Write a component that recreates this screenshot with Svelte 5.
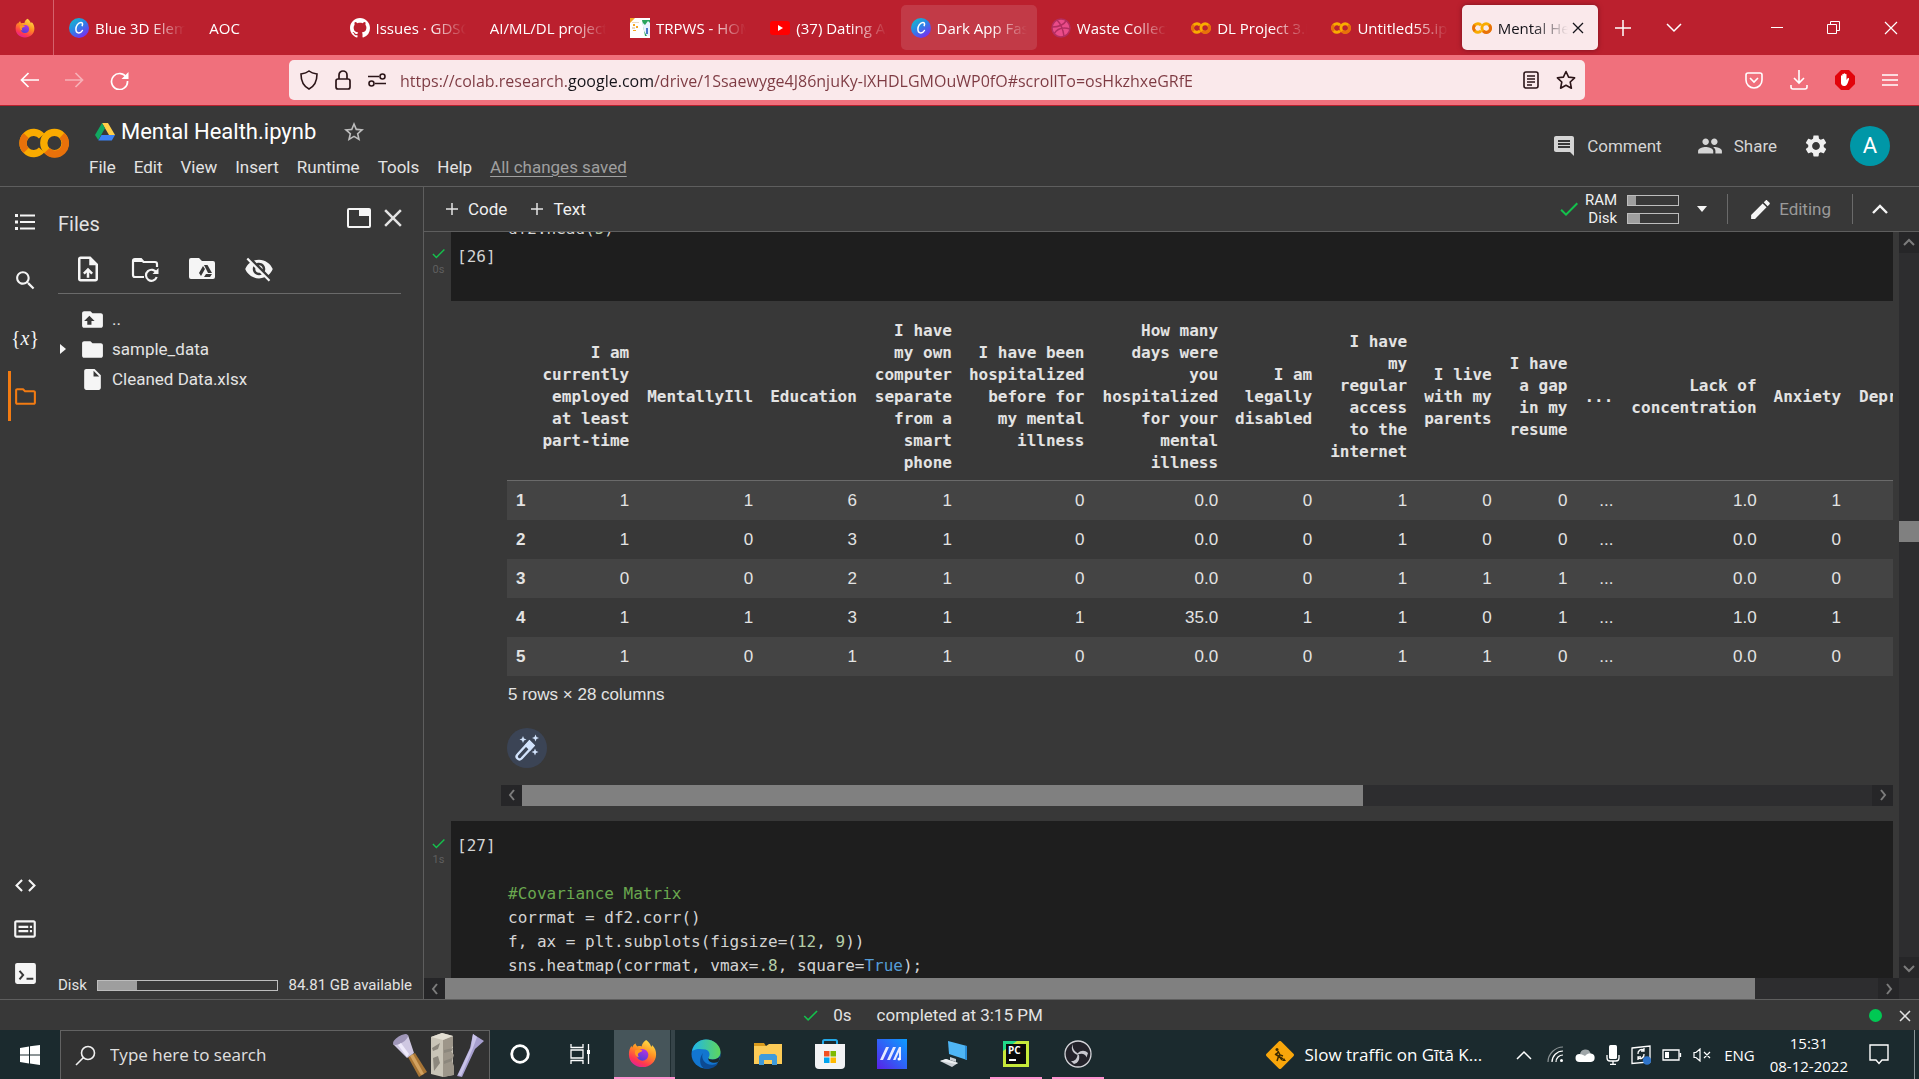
<script>
  const tabs = [
    { icon: 'canva', title: 'Blue 3D Element' },
    { icon: '', title: 'AOC' },
    { icon: 'github', title: 'Issues · GDSC-VIT' },
    { icon: '', title: 'AI/ML/DL projects' },
    { icon: 'sheet', title: 'TRPWS - HOME' },
    { icon: 'youtube', title: '(37) Dating App' },
    { icon: 'canva', title: 'Dark App Fashion', hover: true },
    { icon: 'dribbble', title: 'Waste Collection' },
    { icon: 'colab', title: 'DL Project 3.ip' },
    { icon: 'colab', title: 'Untitled55.ipynb' },
    { icon: 'colab', title: 'Mental Health', active: true }
  ];
  const menus = ['File', 'Edit', 'View', 'Insert', 'Runtime', 'Tools', 'Help'];
  const columns = [
    '',
    'I am\ncurrently\nemployed\nat least\npart-time',
    'MentallyIll',
    'Education',
    'I have\nmy own\ncomputer\nseparate\nfrom a\nsmart\nphone',
    'I have been\nhospitalized\nbefore for\nmy mental\nillness',
    'How many\ndays were\nyou\nhospitalized\nfor your\nmental\nillness',
    'I am\nlegally\ndisabled',
    'I have\nmy\nregular\naccess\nto the\ninternet',
    'I live\nwith my\nparents',
    'I have\na gap\nin my\nresume',
    '...',
    'Lack of\nconcentration',
    'Anxiety',
    'Depression'
  ];
  const rows = [
    ['1', '1', '1', '6', '1', '0', '0.0', '0', '1', '0', '0', '...', '1.0', '1', ''],
    ['2', '1', '0', '3', '1', '0', '0.0', '0', '1', '0', '0', '...', '0.0', '0', ''],
    ['3', '0', '0', '2', '1', '0', '0.0', '0', '1', '1', '1', '...', '0.0', '0', ''],
    ['4', '1', '1', '3', '1', '1', '35.0', '1', '1', '0', '1', '...', '1.0', '1', ''],
    ['5', '1', '0', '1', '1', '0', '0.0', '0', '1', '1', '0', '...', '0.0', '0', '']
  ];
  // Each line is a list of [token class, text] pairs.
  const headCode = [[['', 'df2.head('], ['num', '5'], ['', ')']]];
  const corrCode = [
    [['com', '#Covariance Matrix']],
    [['', 'corrmat = df2.corr()']],
    [['', 'f, ax = plt.subplots(figsize=('], ['num', '12'], ['', ', '], ['num', '9'], ['', '))']],
    [['', 'sns.heatmap(corrmat, vmax='], ['num', '.8'], ['', ', square='], ['kw', 'True'], ['', ');']]
  ];
  const P = {
    search: 'M15.5 14h-.79l-.28-.27C15.41 12.59 16 11.11 16 9.5 16 5.91 13.09 3 9.5 3S3 5.91 3 9.5 5.91 16 9.5 16c1.61 0 3.09-.59 4.23-1.57l.27.28v.79l5 4.99L20.49 19l-4.99-5zm-6 0C7.01 14 5 11.99 5 9.5S7.01 5 9.5 5 14 7.01 14 9.5 11.99 14 9.5 14z',
    folderLine: 'M9.17 6l2 2H20v10H4V6h5.17M10 4H4c-1.1 0-1.99.9-1.99 2L2 18c0 1.1.9 2 2 2h16c1.1 0 2-.9 2-2V8c0-1.1-.9-2-2-2h-8l-2-2z',
    folder: 'M10 4H4c-1.1 0-1.99.9-1.99 2L2 18c0 1.1.9 2 2 2h16c1.1 0 2-.9 2-2V8c0-1.1-.9-2-2-2h-8l-2-2z',
    file: 'M6 2c-1.1 0-1.99.9-1.99 2L4 20c0 1.1.89 2 1.99 2H18c1.1 0 2-.9 2-2V8l-6-6H6zm7 7V3.5L18.5 9H13z',
    gear: 'M19.14 12.94c.04-.3.06-.61.06-.94 0-.32-.02-.64-.07-.94l2.03-1.58c.18-.14.23-.41.12-.61l-1.92-3.32c-.12-.22-.37-.29-.59-.22l-2.39.96c-.5-.38-1.03-.7-1.62-.94l-.36-2.54c-.04-.24-.24-.41-.48-.41h-3.84c-.24 0-.43.17-.47.41l-.36 2.54c-.59.24-1.13.57-1.62.94l-2.39-.96c-.22-.08-.47 0-.59.22L2.74 8.87c-.12.21-.08.47.12.61l2.03 1.58c-.05.3-.09.63-.09.94s.02.64.07.94l-2.03 1.58c-.18.14-.23.41-.12.61l1.92 3.32c.12.22.37.29.59.22l2.39-.96c.5.38 1.03.7 1.62.94l.36 2.54c.05.24.24.41.48.41h3.84c.24 0 .44-.17.47-.41l.36-2.54c.59-.24 1.13-.56 1.62-.94l2.39.96c.22.08.47 0 .59-.22l1.92-3.32c.12-.22.07-.47-.12-.61l-2.01-1.58zM12 15.6c-1.98 0-3.6-1.62-3.6-3.6s1.62-3.6 3.6-3.6 3.6 1.62 3.6 3.6-1.62 3.6-3.6 3.6z',
    comment: 'M21.99 4c0-1.1-.89-2-1.99-2H4c-1.1 0-2 .9-2 2v12c0 1.1.9 2 2 2h14l4 4-.01-18zM18 14H6v-2h12v2zm0-3H6V9h12v2zm0-3H6V6h12v2z',
    people: 'M16 11c1.66 0 2.99-1.34 2.99-3S17.66 5 16 5c-1.66 0-3 1.34-3 3s1.34 3 3 3zm-8 0c1.66 0 2.99-1.34 2.99-3S9.66 5 8 5C6.34 5 5 6.34 5 8s1.34 3 3 3zm0 2c-2.33 0-7 1.17-7 3.5V19h14v-2.5c0-2.33-4.67-3.5-7-3.5zm8 0c-.29 0-.62.02-.97.05 1.16.84 1.97 1.97 1.97 3.45V19h6v-2.5c0-2.33-4.67-3.5-7-3.5z',
    pencil: 'M3 17.25V21h3.75L17.81 9.94l-3.75-3.75L3 17.25zM20.71 7.04c.39-.39.39-1.02 0-1.41l-2.34-2.34c-.39-.39-1.02-.39-1.41 0l-1.83 1.83 3.75 3.75 1.83-1.83z',
    hidden: 'M12 7c2.76 0 5 2.24 5 5 0 .65-.13 1.26-.36 1.83l2.92 2.92c1.51-1.26 2.7-2.89 3.43-4.75-1.73-4.39-6-7.5-11-7.5-1.4 0-2.74.25-3.98.7l2.16 2.16C10.74 7.13 11.35 7 12 7zM2 4.27l2.28 2.28.46.46C3.08 8.3 1.78 10.02 1 12c1.73 4.39 6 7.5 11 7.5 1.55 0 3.03-.3 4.38-.84l.42.42L19.73 22 21 20.73 3.27 3 2 4.27zM7.53 9.8l1.55 1.55c-.05.21-.08.43-.08.65 0 1.66 1.34 3 3 3 .22 0 .44-.03.65-.08l1.55 1.55c-.67.33-1.41.53-2.2.53-2.76 0-5-2.24-5-5 0-.79.2-1.53.53-2.2zm4.31-.78l3.15 3.15.02-.16c0-1.66-1.34-3-3-3l-.17.01z',
    star: 'M22 9.24l-7.19-.62L12 2 9.19 8.63 2 9.24l5.46 4.73L5.82 21 12 17.27 18.18 21l-1.63-7.03L22 9.24zM12 15.4l-3.76 2.27 1-4.28-3.32-2.88 4.38-.38L12 6.1l1.71 4.04 4.38.38-3.32 2.88 1 4.28L12 15.4z',
    check: 'M9 16.17L4.83 12l-1.42 1.41L9 19 21 7l-1.41-1.41z',
    close: 'M19 6.41L17.59 5 12 10.59 6.41 5 5 6.41 10.59 12 5 17.59 6.41 19 12 13.41 17.59 19 19 17.59 13.41 12z',
    code: 'M9.4 16.6L4.8 12l4.6-4.6L8 6l-6 6 6 6 1.4-1.4zm5.2 0l4.6-4.6-4.6-4.6L16 6l6 6-6 6-1.4-1.4z',
    list: 'M2 4h3v3H2zM7 4.500h15v2H7zM2 10.500h3v3H2zM7 11h15v2H7zM2 17h3v3H2zM7 17.500h15v2H7z',
    upload: 'M14 2H6c-1.100 0-2 .9-2 2v16c0 1.100.9 2 2 2h12c1.100 0 2-.9 2-2V8l-6-6zm4 18H6V4h7v5h5v11zM8 15l1.400 1.400L11 14.800V19h2v-4.200l1.600 1.600L16 15l-4-4z',
    up: 'M10 4H4c-1.100 0-2 .9-2 2v12c0 1.100.9 2 2 2h16c1.100 0 2-.9 2-2V8c0-1.100-.9-2-2-2h-8l-2-2zM9 8.500l5 5h-3V17H7v-3.500H4z',
    kbd: 'M20 4H4c-1.100 0-2 .9-2 2v12c0 1.100.9 2 2 2h16c1.100 0 2-.9 2-2V6c0-1.100-.9-2-2-2zm0 14H4V6h16v12zM6 9h9v2H6zM16.500 9h2v2h-2zM6 13h9v2H6zM16.500 13h2v2h-2z',
    term: 'M4 2h16a2 2 0 0 1 2 2v16a2 2 0 0 1-2 2H4a2 2 0 0 1-2-2V4c0-1.100.9-2 2-2zm1.500 8L8.500 13.500 5.500 17 7 18.200l4-4.700-4-4.700zM13 16v2h6.500v-2z'
  };
</script>

{#snippet mi(path, size = 24)}
  <svg width={size} height={size} viewBox="0 0 24 24" fill="currentColor" aria-hidden="true"><path d={path} fill-rule="evenodd" /></svg>
{/snippet}

{#snippet colab(w)}
  <svg width={w} height={w} viewBox="0 0 24 24" fill="none" stroke-width="3.500" aria-hidden="true">
    <path d="M10.900 8.700a5.100 5.100 0 1 0 0 6.600" stroke="#f9ab00" />
    <path d="M3.400 8.400a5.100 5.100 0 0 0 0 7.200" stroke="#e8710a" />
    <circle cx="17" cy="12" r="5.100" stroke="#f9ab00" />
    <path d="M20.600 8.400a5.100 5.100 0 1 1-7.200 7.200" stroke="#e8710a" />
  </svg>
{/snippet}

{#snippet firefox(size)}
  <svg width={size} height={size} viewBox="0 0 32 32" aria-hidden="true">
    <defs>
      <linearGradient id="fx" x1="0.800" y1="0" x2="0.300" y2="1"><stop offset="0" stop-color="#ffe74a" /><stop offset="0.450" stop-color="#ff9022" /><stop offset="0.800" stop-color="#ff3750" /><stop offset="1" stop-color="#e1219a" /></linearGradient>
      <linearGradient id="fp" x1="0.700" y1="0" x2="0.300" y2="1"><stop offset="0" stop-color="#b833e1" /><stop offset="1" stop-color="#4b3fd6" /></linearGradient>
    </defs>
    <path fill="url(#fx)" d="M20 1c3 2 5 5 5.500 7.500.8-.3 1-1 1-2C30 9.500 31 13.500 31 17c0 8-6.500 14-15 14S1 25 1 17c0-4 1-7 3-9.500 0 1 .3 1.500.7 2C5.500 7 7 5.500 8.500 5c0 1.500.8 2.500 2 3.200 1.500-.5 3-.5 4.500 0C15.500 5 17.500 2.500 20 1z" />
    <circle cx="16" cy="17.500" r="6.500" fill="url(#fp)" />
    <path fill="#ff9a1f" d="M8 12.500c3-1.500 5.500-1 8 .2-1 1.800-3 1.800-4.500 3-1 1-.8 3 .8 4.300-3.500 0-5.500-3.500-4.300-7.500z" />
  </svg>
{/snippet}

{#snippet favicon(kind)}
  {#if kind === 'canva'}
    <svg width="20" height="20" viewBox="0 0 20 20" aria-hidden="true">
      <defs><linearGradient id="cv" x1="0" y1="0" x2="0.700" y2="1"><stop offset="0" stop-color="#12c3c4" /><stop offset="0.500" stop-color="#2a86e6" /><stop offset="1" stop-color="#7a2df0" /></linearGradient></defs>
      <circle cx="10" cy="10" r="10" fill="url(#cv)" />
      <path d="M13.200 7.600c.8-1.800.2-3.200-1.400-3.200-2.600 0-4.900 3.600-4.900 6.700 0 2.300 1.100 3.900 2.900 3.900 1.600 0 2.900-1.200 3.600-2.500" fill="none" stroke="#fff" stroke-width="1.500" stroke-linecap="round" />
    </svg>
  {:else if kind === 'github'}
    <svg width="20" height="20" viewBox="0 0 16 16" fill="#fff" aria-hidden="true"><path d="M8 0C3.580 0 0 3.580 0 8c0 3.540 2.290 6.530 5.470 7.590.4.070.55-.17.55-.38 0-.19-.01-.82-.01-1.490-2.010.37-2.530-.49-2.690-.94-.09-.23-.48-.94-.82-1.130-.28-.15-.68-.52-.01-.53.63-.01 1.080.58 1.230.82.72 1.210 1.870.87 2.330.66.070-.52.28-.87.51-1.070-1.780-.2-3.640-.89-3.640-3.950 0-.87.31-1.590.82-2.150-.08-.2-.36-1.020.080-2.120 0 0 .67-.21 2.200.82.64-.18 1.320-.27 2-.27s1.360.09 2 .27c1.530-1.040 2.200-.82 2.200-.82.44 1.100.16 1.920.080 2.120.51.56.82 1.270.82 2.150 0 3.070-1.870 3.750-3.650 3.950.29.25.54.73.54 1.480 0 1.070-.01 1.930-.01 2.200 0 .21.15.46.55.38A8.010 8.010 0 0 0 16 8c0-4.420-3.580-8-8-8z" /></svg>
  {:else if kind === 'sheet'}
    <svg width="20" height="20" viewBox="0 0 20 20" aria-hidden="true"><path fill="#fff" d="M0 0h20v20H0z" /><path fill="#28a35c" d="M12 2h8v16h-5z" /><path fill="#f5a623" d="M0 0h5L0 5zM3 6h2v2H3zM6 8h2v2H6zM3 12h3v1H3z" /><path fill="#e8d8c4" d="M2 4h7v1H2zM2 9h3v2H2z" /><path fill="#e9f1ff" d="M12 4l3 3 3-4 2 2v13h-3l-3-5z" /><path fill="#4b79c9" d="M16 10h2v6h-2z" /></svg>
  {:else if kind === 'youtube'}
    <svg width="20" height="20" viewBox="0 0 20 20" aria-hidden="true"><rect y="3" width="20" height="14" rx="3" fill="#f00" /><path fill="#fff" d="M8 7l5 3-5 3z" /></svg>
  {:else if kind === 'dribbble'}
    <svg width="20" height="20" viewBox="0 0 20 20" fill="none" stroke="#b32d60" stroke-width="1.500" aria-hidden="true"><circle cx="10" cy="10" r="9" fill="#ea4c89" /><path d="M6 2c4 4 6 9 7 16M1 9c6 0 11-1 14-6M3 16c3-5 9-7 16-5" /></svg>
  {:else if kind === 'colab'}
    {@render colab(20)}
  {/if}
{/snippet}

{#snippet chev(d, size = 12)}
  <svg width={size} height={size} viewBox="0 0 12 12" fill="none" stroke="currentColor" stroke-width="2" aria-hidden="true"><path {d} /></svg>
{/snippet}

{#snippet codeLines(lines)}
  <div class="code">
    {#each lines as line}
      <div class="line">{#each line as [kind, text]}<span class={kind}>{text}</span>{/each}</div>
    {/each}
  </div>
{/snippet}

<div class="screen">
  <header class="tabbar">
    <button class="pinned" aria-label="Firefox">{@render firefox(20)}</button>
    <nav class="tabs" aria-label="Tabs">
      {#each tabs as t}
        <div class="tab" class:hover={t.hover} class:active={t.active}>
          <button class="tabmain">
            {#if t.icon}{@render favicon(t.icon)}{/if}
            <span class="tabtitle">{t.title}</span>
          </button>
          {#if t.active}
            <button class="tabclose" aria-label="Close tab"><svg width="12" height="12" viewBox="0 0 12 12" stroke="currentColor" stroke-width="1.300"><path d="M1 1l10 10M11 1L1 11" /></svg></button>
          {/if}
        </div>
      {/each}
    </nav>
    <button class="newtab" aria-label="New tab"><svg width="16" height="16" viewBox="0 0 16 16" stroke="#fff" stroke-width="1.500"><path d="M8 0v16M0 8h16" /></svg></button>
    <button class="listtabs" aria-label="List all tabs"><svg width="16" height="10" viewBox="0 0 16 10" fill="none" stroke="#fff" stroke-width="1.500"><path d="M1 1l7 7 7-7" /></svg></button>
    <div class="winbtns">
      <button aria-label="Minimise"><svg width="12" height="12" viewBox="0 0 12 12" stroke="#fff"><path d="M0 5.500h12" /></svg></button>
      <button aria-label="Restore"><svg width="13" height="13" viewBox="0 0 13 13" fill="none" stroke="#fff"><path d="M.5 3.500h9v9h-9zM3.500 3.500v-3h9v9h-3" /></svg></button>
      <button aria-label="Close"><svg width="14" height="14" viewBox="0 0 14 14" stroke="#fff" stroke-width="1.200"><path d="M1 1l12 12M13 1L1 13" /></svg></button>
    </div>
  </header>

  <div class="navbar">
    <div class="navbtns">
      <button aria-label="Back"><svg width="19" height="16" viewBox="0 0 19 16" fill="none" stroke="#fff" stroke-width="1.700"><path d="M19 8H1.500M8.500 1l-7 7 7 7" /></svg></button>
      <button class="dim" aria-label="Forward"><svg width="19" height="16" viewBox="0 0 19 16" fill="none" stroke="#fff" stroke-width="1.700"><path d="M0 8h17.500M10.500 1l7 7-7 7" /></svg></button>
      <button aria-label="Reload"><svg width="19" height="19" viewBox="0 0 19 19" fill="none" stroke="#fff" stroke-width="1.700"><path d="M16.700 7A8 8 0 1 0 17.500 10" /><path fill="#fff" stroke="none" d="M18.500 1v7h-7z" /></svg></button>
    </div>
    <div class="urlbar">
      <svg width="18" height="20" viewBox="0 0 18 20" fill="none" stroke="#2b1518" stroke-width="1.600" aria-hidden="true"><path d="M9 1c2.500 2 5 2.500 8 3 0 7-2 12-8 15C3 16 1 11 1 4c3-.5 5.500-1 8-3z" /></svg>
      <svg width="16" height="20" viewBox="0 0 16 20" fill="none" stroke="#2b1518" stroke-width="1.700" aria-hidden="true"><rect x="1" y="9" width="14" height="10" rx="2" /><path d="M4 9V5a4 4 0 0 1 8 0v4" /></svg>
      <svg width="18" height="14" viewBox="0 0 18 14" fill="none" stroke="#2b1518" stroke-width="1.600" aria-hidden="true"><path d="M0 3.500h11M7 10.500h11" /><circle cx="14.500" cy="3.500" r="2.500" /><circle cx="3.500" cy="10.500" r="2.500" /></svg>
      <input class="url" type="text" aria-label="Address" value="https://colab.research.google.com/drive/1Ssaewyge4J86njuKy-lXHDLGMOuWP0fO#scrollTo=osHkzhxeGRfE" />
      <button aria-label="Reader view"><svg width="16" height="18" viewBox="0 0 16 18" fill="none" stroke="#2b1518" stroke-width="1.600"><rect x="1" y="1" width="14" height="16" rx="2" /><path d="M4 5h8M4 8h8M4 11h8M4 14h5" stroke-width="1.300" /></svg></button>
      <button aria-label="Bookmark"><svg width="20" height="20" viewBox="0 0 20 20" fill="none" stroke="#2b1518" stroke-width="1.600" stroke-linejoin="round"><path d="M10 1.500l2.600 5.600 6 .7-4.400 4.200 1.200 6.200-5.400-3-5.400 3 1.200-6.200L1.400 7.800l6-.7z" /></svg></button>
    </div>
    <div class="exts">
      <button aria-label="Pocket"><svg width="18" height="17" viewBox="0 0 18 17" fill="none" stroke="#fff" stroke-width="1.600"><path d="M3 1h12a2 2 0 0 1 2 2v5c0 4.500-3.500 8-8 8s-8-3.500-8-8V3a2 2 0 0 1 2-2zM5 6l4 4 4-4" /></svg></button>
      <button aria-label="Downloads"><svg width="18" height="20" viewBox="0 0 18 20" fill="none" stroke="#fff" stroke-width="1.600"><path d="M9 0v13M4 8l5 5 5-5M1 15v2a2 2 0 0 0 2 2h12a2 2 0 0 0 2-2v-2" /></svg></button>
      <button aria-label="Ad blocker"><svg width="20" height="20" viewBox="0 0 20 20"><path fill="#e2040b" d="M6 0h8l6 6v8l-6 6H6l-6-6V6z" /><path fill="#fff" d="M6 9V6c0-1 1.300-1 1.300 0V4.500c0-1 1.400-1 1.400 0V4c0-1 1.400-1 1.400 0v.5c0-1 1.400-1 1.400 0V10l1-1.500c.6-.9 1.900-.4 1.500.7-.8 2.500-1.800 6.800-4.200 6.800H9c-2 0-3-1.500-3-3z" /></svg></button>
      <button aria-label="Menu"><svg width="16" height="14" viewBox="0 0 16 14" stroke="#fff" stroke-width="1.500"><path d="M0 2h16M0 7h16M0 12h16" /></svg></button>
    </div>
  </div>

  <div class="head">
    <a class="logo" href="#home" aria-label="Colab home">{@render colab(50)}</a>
    <div class="headmain">
      <div class="titlerow">
        <svg width="20" height="18" viewBox="0 0 20 18" aria-hidden="true"><path fill="#ffcf48" d="M7 0h6l7 12h-6z" /><path fill="#11a861" d="M7 0l3 5.200L3.300 17 0 12z" /><path fill="#3b82f6" d="M6.500 12H20l-3.200 5.500H3.300z" /></svg>
        <h1>Mental Health.ipynb</h1>
        <button class="star" aria-label="Star">{@render mi(P.star, 24)}</button>
      </div>
      <nav class="menus" aria-label="Notebook menu">
        {#each menus as m}<button>{m}</button>{/each}
        <a href="#history">All changes saved</a>
      </nav>
    </div>
    <div class="headright">
      <button class="hbtn">{@render mi(P.comment, 24)}Comment</button>
      <button class="hbtn">{@render mi(P.people, 26)}Share</button>
      <button class="gear" aria-label="Settings">{@render mi(P.gear, 26)}</button>
      <button class="avatar" aria-label="Account">A</button>
    </div>
  </div>

  <div class="body">
    <aside class="side">
      <nav class="rail" aria-label="Side panel">
        <button aria-label="Table of contents">{@render mi(P.list, 24)}</button>
        <button aria-label="Find">{@render mi(P.search, 25)}</button>
        <button class="vars" aria-label="Variables">&#123;<i>x</i>&#125;</button>
        <button class="on" aria-label="Files">{@render mi(P.folderLine, 25)}</button>
        <span class="grow"></span>
        <button class="low" aria-label="Snippets">{@render mi(P.code, 25)}</button>
        <button class="low" aria-label="Command palette">{@render mi(P.kbd, 26)}</button>
        <button class="low" aria-label="Terminal">{@render mi(P.term, 25)}</button>
      </nav>
      <section class="files">
        <div class="fhead">
          <h2>Files</h2>
          <button aria-label="Open in new tab"><svg width="24" height="20" viewBox="0 0 24 20"><rect x="1" y="1" width="22" height="18" rx="1" fill="none" stroke="#f5f5f5" stroke-width="2" /><path fill="#f5f5f5" d="M12 1h11v7H12z" /></svg></button>
          <button aria-label="Close panel">{@render mi(P.close, 30)}</button>
        </div>
        <div class="ftools">
          <button aria-label="Upload">{@render mi(P.upload, 30)}</button>
          <button aria-label="Refresh"><svg width="30" height="30" viewBox="0 0 30 30" fill="none" stroke="#f5f5f5" stroke-width="2.200"><path d="M14 23H5a2 2 0 0 1-2-2V7a2 2 0 0 1 2-2h6l2.500 3H25a2 2 0 0 1 2 2v3" /><path d="M3 5h8l2 3H3z" fill="#f5f5f5" stroke="none" /><path d="M26.500 19a5.500 5.500 0 1 0 .2 4" /><path d="M28.500 14v6h-6z" fill="#f5f5f5" stroke="none" /></svg></button>
          <button aria-label="Mount Drive"><svg width="30" height="30" viewBox="0 0 30 30"><path fill="#f5f5f5" d="M4 4h8l3 3h11a2 2 0 0 1 2 2v14a2 2 0 0 1-2 2H4a2 2 0 0 1-2-2V6a2 2 0 0 1 2-2z" /><path d="M17 11h3.500l4.500 8h-4zM16 12l2 3-4 7-2-3zM19 20h6l-2 3h-6z" fill="#383838" /></svg></button>
          <button aria-label="Show hidden files">{@render mi(P.hidden, 30)}</button>
        </div>
        <ul class="tree">
          <li><span class="tw"></span><button>{@render mi(P.up, 25)}<span>..</span></button></li>
          <li><span class="tw"><svg width="6" height="10" viewBox="0 0 6 10" fill="#f5f5f5" aria-hidden="true"><path d="M0 0l6 5-6 5z" /></svg></span><button>{@render mi(P.folder, 25)}<span>sample_data</span></button></li>
          <li><span class="tw"></span><button>{@render mi(P.file, 25)}<span>Cleaned Data.xlsx</span></button></li>
        </ul>
        <span class="grow"></span>
        <div class="disk"><span>Disk</span><div class="bar"><i></i></div><span>84.81 GB available</span></div>
      </section>
    </aside>

    <main class="main">
      <div class="nbbar">
        <button class="add"><svg width="12" height="12" viewBox="0 0 12 12" stroke="#e3e3e3" stroke-width="1.500"><path d="M6 0v12M0 6h12" /></svg>Code</button>
        <button class="add"><svg width="12" height="12" viewBox="0 0 12 12" stroke="#e3e3e3" stroke-width="1.500"><path d="M6 0v12M0 6h12" /></svg>Text</button>
        <span class="grow"></span>
        <div class="res">
          <span class="green">{@render mi(P.check, 24)}</span>
          <div class="labels"><span>RAM</span><span>Disk</span></div>
          <div class="meters"><div class="bar"><i class="ram"></i></div><div class="bar"><i class="dsk"></i></div></div>
          <button class="caret" aria-label="Resource options"><svg width="10" height="6" viewBox="0 0 10 6" fill="#f5f5f5"><path d="M0 0h10L5 6z" /></svg></button>
        </div>
        <button class="editing">{@render mi(P.pencil, 25)}Editing</button>
        <button class="fold" aria-label="Collapse header"><svg width="16" height="10" viewBox="0 0 16 10" fill="none" stroke="#f5f5f5" stroke-width="2.400"><path d="M1 9l7-7 7 7" /></svg></button>
      </div>

      <div class="nbwrap">
        <div class="nb">
          <section class="cell first">
            <div class="gutter"><span class="green">{@render mi(P.check, 17)}</span><small>0s</small></div>
            <div class="editor"><span class="prompt">[26]</span>{@render codeLines(headCode)}</div>
          </section>

          <section class="out">
            <div class="tablewrap">
              <table>
                <thead><tr>{#each columns as c}<th scope="col">{c}</th>{/each}</tr></thead>
                <tbody>
                  {#each rows as r}
                    <tr>{#each r as v, i}{#if i === 0}<th scope="row">{v}</th>{:else}<td>{v}</td>{/if}{/each}</tr>
                  {/each}
                </tbody>
              </table>
            </div>
            <p>5 rows × 28 columns</p>
            <button class="magic" aria-label="Convert to interactive table"><svg width="30" height="30" viewBox="0 0 30 30"><path d="M17.500 8.500l4 4L9.500 25.500a2.500 2.500 0 0 1-4-4z" fill="none" stroke="#d2e3fc" stroke-width="2.400" /><path d="M17.500 8.500l4 4-3.500 4-4-4z" fill="#d2e3fc" stroke="#d2e3fc" stroke-width="2" /><path fill="#d2e3fc" d="M11 3l1 2.500 2.500 1-2.500 1-1 2.500-1-2.500-2.500-1 2.500-1zM23.500 1.500l1 2.500 2.500 1-2.500 1-1 2.500-1-2.500-2.500-1 2.500-1zM23 15.500l1 2.500 2.500 1-2.500 1-1 2.500-1-2.500-2.500-1 2.500-1z" /></svg></button>
            <div class="hbar inner">
              <button aria-label="Scroll left">{@render chev('M8 1L4 6l4 5')}</button><i></i><span></span><button aria-label="Scroll right">{@render chev('M4 1l4 5-4 5')}</button>
            </div>
          </section>

          <section class="cell">
            <div class="gutter"><span class="green">{@render mi(P.check, 17)}</span><small>1s</small></div>
            <div class="editor"><span class="prompt">[27]</span>{@render codeLines(corrCode)}</div>
          </section>
        </div>
        <div class="vbar">
          <button aria-label="Scroll up">{@render chev('M1 8l5-5 5 5')}</button><span class="above"></span><i></i><span class="below"></span><button aria-label="Scroll down">{@render chev('M1 4l5 5 5-5')}</button>
        </div>
      </div>
      <div class="hbar outer">
        <button aria-label="Scroll left">{@render chev('M8 1L4 6l4 5')}</button><i></i><span></span><button aria-label="Scroll right">{@render chev('M4 1l4 5-4 5')}</button>
        <div class="corner"></div>
      </div>
    </main>
  </div>

  <footer class="status">
    <span class="green">{@render mi(P.check, 19)}</span><span class="sec">0s</span><span>completed at 3:15 PM</span>
    <div class="stright"><span class="dot"></span><button aria-label="Dismiss"><svg width="12" height="12" viewBox="0 0 12 12" stroke="#e3e3e3" stroke-width="1.500"><path d="M1 1l10 10M11 1L1 11" /></svg></button></div>
  </footer>

  <div class="taskbar">
    <button class="start" aria-label="Start"><svg width="20" height="20" viewBox="0 0 20 20" fill="#fff"><path d="M0 3l9-1.500v8H0zM10 1.300L20 0v9.500H10zM0 10.500h9v8L0 17zM10 10.500h10V20l-10-1.400z" /></svg></button>
    <label class="search">
      <svg width="21" height="21" viewBox="0 0 21 21" fill="none" stroke="#f0f0f0" stroke-width="1.600" aria-hidden="true"><circle cx="13" cy="8" r="6.500" /><path d="M8.500 12.500L1 20" /></svg>
      <input type="search" placeholder="Type here to search" aria-label="Search" />
      <svg class="art" width="92" height="46" viewBox="0 0 92 46" aria-hidden="true">
        <path fill="#a87535" d="M15 25l7-4 12 19-8 5z" /><path fill="#d3a260" d="M17 24l3-2 11 20-3 1z" /><path fill="#cfc8e2" d="M0 12L15 3l6 18-7 5z" /><ellipse cx="7.500" cy="7.500" rx="8.500" ry="3.500" transform="rotate(-32 7.500 7.500)" fill="#9f96b8" /><path fill="#eeeafa" d="M5 13l3-2 8 11-2 3z" />
        <path fill="#c9c4b7" d="M38 5l11-4 11 3v39l-10 2-12-3z" /><path fill="#9d968a" d="M50 8l10-4v10l-3 4 4 5-2 6 2 5v9l-11 2z" /><path fill="#e3dfd3" d="M38 5l11-4 11 3-10 4z" /><path fill="#8c877d" d="M39 16l8-5-2 6-5 2zM40 26l5-2 2 7-6 8zM51 18l9-2-1 3-8 2zM51 29l8-3v3l-8 3z" />
        <path fill="#a79fcf" d="M80 2l11 7-9 8-13 28-5-1 13-28z" /><path fill="#c9c3e8" d="M80 2l4 3-4 11-12 28-3-1 13-28z" />
      </svg>
    </label>
    <button class="app cortana" aria-label="Cortana"><svg width="20" height="20" viewBox="0 0 20 20"><circle cx="10" cy="10" r="8.300" fill="none" stroke="#fff" stroke-width="2.800" /></svg></button>
    <button class="app" aria-label="Task view"><svg width="20" height="20" viewBox="0 0 20 20" fill="none" stroke="#fff" stroke-width="1.300"><path d="M1 0v3.500h12V0M1 6h12v8H1zM1 20v-3.500h12V20M18.500 0v20" /><path d="M17 6h3v4h-3z" fill="#fff" stroke="none" /></svg></button>
    <button class="app current" aria-label="Firefox">{@render firefox(29)}</button>
    <button class="app" aria-label="Edge"><svg width="30" height="30" viewBox="0 0 30 30"><defs><linearGradient id="eg"><stop stop-color="#1fb5ea" /><stop offset="1" stop-color="#5fd65b" /></linearGradient></defs><circle cx="15" cy="15" r="14.500" fill="#1276d0" /><path fill="url(#eg)" d="M1 12C3 4 9 .5 15 .5c8 0 14.500 6 14.500 12.500 0 5-4 7.500-8 7.500-3 0-4.500-1-4-2 2-3 1-7-3-8-5-1-10-1-13.500 1.500z" /><path fill="#0c4a92" d="M12 14c-3 6 3 13 11 11.500 2-.4 3.500-1.300 4-1-2 3-6.500 5.500-11 5.500-7 0-9-10-4-16z" /><path fill="#1b2a2e" d="M17.500 18.500c-.5 1 1 2 4 2 3.500 0 6-1.500 7.500-3.500-.2 3-1 5-2 6-4 2-11 0-9.500-4.500z" /></svg></button>
    <button class="app" aria-label="File Explorer"><svg width="28" height="24" viewBox="0 0 28 24"><path fill="#d99a1c" d="M0 1h10l2 3H0z" /><path fill="#fccb57" d="M0 4h12l3-2h13v20H0z" /><path fill="#3f9bdc" d="M5 14l2-2h14l2 2v9h-5v-5h-8v5H5z" /></svg></button>
    <button class="app" aria-label="Store"><svg width="30" height="30" viewBox="0 0 30 30"><path fill="none" stroke="#23a8e8" stroke-width="2" d="M8 6V2.500C8 1.500 8.500 1 9.500 1h11c1 0 1.500.5 1.500 1.500V6" /><path fill="#f2f3f5" d="M0 5h30v21a4 4 0 0 1-4 4H4a4 4 0 0 1-4-4z" /><path fill="#f25022" d="M9 12h5.500v5.500H9z" /><path fill="#7fba00" d="M15.500 12H21v5.500h-5.500z" /><path fill="#00a4ef" d="M9 18.500h5.500V24H9z" /><path fill="#ffb900" d="M15.500 18.500H21V24h-5.500z" /></svg></button>
    <button class="app" aria-label="MyASUS"><svg width="30" height="30" viewBox="0 0 30 30"><defs><linearGradient id="ms" x1="0" y1="1" x2="1" y2="0"><stop stop-color="#5a20e8" /><stop offset="0.500" stop-color="#2f62f6" /><stop offset="1" stop-color="#0b9dff" /></linearGradient></defs><path fill="url(#ms)" d="M0 0h30v30H0z" /><path fill="#e6e9ff" d="M3 21L9 8h3L6 21zM10 21l6-13h3l-6 13zM16 21l6-13h2v13h-2v-8l-3.500 8z" /><circle cx="22" cy="20" r="1.500" fill="#fff" /></svg></button>
    <button class="app" aria-label="PC"><svg width="28" height="26" viewBox="0 0 28 26"><path fill="#4fb6f5" d="M8 0l19 5v14L9 13z" /><path fill="#2a8dd8" d="M25 5l2 0v14l-2-1z" /><path fill="#c9ced3" d="M10 16l6 2v3l-6-2zM0 20l6-2 12 4-6 4z" /><path fill="#eceff1" d="M0 20l6-2 12 4-2 1z" /></svg></button>
    <button class="app open" aria-label="PyCharm"><svg width="26" height="26" viewBox="0 0 26 26"><path fill="#c7e93a" d="M0 0h26v26H0z" /><path fill="#21d789" d="M0 0h14L0 10z" /><path fill="#0a0a0a" d="M3 3h20v20H3z" /><text x="5" y="13" font-size="10" font-weight="700" font-family="Open Sans, sans-serif" fill="#fff">PC</text><path fill="#fff" d="M6 18h7v2H6z" /></svg></button>
    <button class="app open" aria-label="OBS"><svg width="28" height="28" viewBox="0 0 28 28" fill="none"><circle cx="14" cy="14" r="13" fill="#23222a" stroke="#d5d5da" stroke-width="1.300" /><g fill="#c8c8cf"><path d="M9 4c-1 4 1 7 5 9.500 0 1 0 1-.5 1.500C8 13 6.500 8 9 4z" /><path d="M24 13c-3-3-7-3-10 0-.5.700-.5 1 0 1.500 4-1.500 7.500-.5 8.500 3z" /><path d="M10 24c4-1 6-4 5-9-.5-.5-1-.5-1.500 0-.5 4-3 6.500-6.500 6z" /></g></svg></button>
    <span class="grow"></span>
    <button class="news"><svg width="28" height="28" viewBox="0 0 28 28" aria-hidden="true"><path fill="#f9a60b" d="M12.500.8a2 2 0 0 1 3 0l11.700 11.700a2 2 0 0 1 0 3L15.500 27.200a2 2 0 0 1-3 0L.8 15.500a2 2 0 0 1 0-3z" /><g stroke="#3d2b00" stroke-width="1.500" fill="none"><path d="M12 10l2 4 3 1M12 11l-2 3M13 14l-2 6M13 15l3 4M9 13l8 5" /></g><circle cx="11" cy="8.500" r="1.500" fill="#3d2b00" /><path fill="#3d2b00" d="M16 20l2-3 2 3z" /></svg>Slow traffic on Gītā K...</button>
    <div class="tray">
      <button class="more" aria-label="Show hidden icons"><svg width="16" height="10" viewBox="0 0 16 10" fill="none" stroke="#fff" stroke-width="1.500"><path d="M1 9l7-7 7 7" /></svg></button>
      <svg width="17" height="17" viewBox="0 0 17 17" fill="none" stroke="#fff" stroke-width="1.200" aria-hidden="true"><path d="M1 16C1 8 8 1 16 1" opacity="0.500" /><path d="M5 16C5 10 10 5 16 5M9 16c0-4 3-7 7-7" /><circle cx="14.500" cy="14.500" r="1.500" fill="#fff" stroke="none" /></svg>
      <svg width="20" height="14" viewBox="0 0 20 14" aria-hidden="true"><path fill="#9fa6a9" d="M5 6a5.500 5.500 0 0 1 10.500-1L10 10z" /><path fill="#fff" d="M4.500 14a4 4 0 0 1 0-8C7 6 8 7 10 8c2-2 4-3 6-2.500A4.300 4.300 0 0 1 16 14z" /></svg>
      <svg width="14" height="20" viewBox="0 0 14 20" aria-hidden="true"><rect x="3" width="8" height="14" rx="1.500" fill="#fff" /><path d="M1 10v3a3 3 0 0 0 3 3h6a3 3 0 0 0 3-3v-3M7 16v3M4 19.300h6" fill="none" stroke="#fff" stroke-width="1.300" /></svg>
      <svg width="20" height="20" viewBox="0 0 20 20" fill="none" stroke="#fff" stroke-width="1.300" aria-hidden="true"><path d="M1 3l18-2v16L1 18.500z" /><path d="M13 5a4 4 0 0 0-6 4M7 13a4 4 0 0 0 6-4M13 3v3h-3M7 15v-3h3" /><circle cx="16" cy="15.500" r="4.200" fill="#2f74c9" stroke="none" /></svg>
      <svg width="20" height="12" viewBox="0 0 20 12" fill="none" stroke="#fff" stroke-width="1.300" aria-hidden="true"><path d="M1 1h16v10H1zM18.500 4v4" /><path fill="#fff" stroke="none" d="M3 3h4v6H3z" /></svg>
      <svg width="20" height="14" viewBox="0 0 20 14" fill="none" stroke="#fff" stroke-width="1.200" aria-hidden="true"><path d="M1 4.500h2l4-3.500v12L3 9.500H1zM11 4l6 6M17 4l-6 6" /></svg>
      <button class="lang">ENG</button>
    </div>
    <button class="clock"><span>15:31</span><span>08-12-2022</span></button>
    <button class="notif" aria-label="Notifications"><svg width="20" height="21" viewBox="0 0 20 21" fill="none" stroke="#fff" stroke-width="1.400"><path d="M1 1h18v15h-6l-3 3.500L7 16H1z" /></svg></button>
  </div>
</div>

<style>
  :global(body) { margin: 0; background: #383838; overflow: hidden; }
  * { box-sizing: border-box; }
  button { background: none; border: 0; padding: 0; margin: 0; font: inherit; color: inherit; display: flex; align-items: center; justify-content: center; white-space: nowrap; }
  svg { display: block; flex: none; }
  h1, h2, p, ul { margin: 0; padding: 0; font-weight: 400; }
  .grow { flex: 1; }
  .green { color: #14c14c; display: flex; }
  .screen { height: 100vh; display: flex; flex-direction: column; background: #383838; color: #e3e3e3; font: 17px/24px Roboto, sans-serif; overflow: hidden; }

  .tabbar { flex: none; height: 55px; background: #bb202e; display: flex; align-items: stretch; font: 15px/20px "Open Sans", sans-serif; color: #fff; }
  .pinned { width: 54px; border-right: 1px solid #d4626c; padding-right: 4px; }
  .tabs { flex: 0 1 1543px; min-width: 0; margin-left: 3px; display: flex; padding: 5px 0; }
  .tab { flex: 1 1 0; min-width: 0; display: flex; align-items: center; margin: 0 2px; padding: 0 10px; border-radius: 5px; }
  .tabmain { flex: 1; min-width: 0; gap: 6px; justify-content: flex-start; }
  .tabtitle { flex: 1; min-width: 0; overflow: hidden; text-align: left; mask-image: linear-gradient(to left, transparent, #000 36px); }
  .tab.hover { background: #c23a47; }
  .tab.active { background: #fae9eb; color: #15141a; box-shadow: 0 0 5px #7a1420; }
  .tabclose { width: 20px; }
  .newtab { width: 54px; margin-left: -4px; }
  .listtabs { width: 48px; }
  .winbtns { margin-left: auto; display: flex; }
  .winbtns button { width: 57px; }

  .navbar { flex: none; height: 51px; background: #f0707c; border-bottom: 1px solid #bb202e; display: flex; align-items: center; justify-content: space-between; padding: 0 21px 0 20px; }
  .navbtns { display: flex; gap: 26px; flex: 0 0 269px; }
  .dim { opacity: .45; }
  .urlbar { flex: 0 1 1297px; min-width: 0; height: 40px; border-radius: 5px; background: #fae9eb; display: flex; align-items: center; gap: 17px; padding: 0 9px 0 11px; }
  .url { flex: 1; min-width: 0; border: 0; padding: 2px 0 0; margin-left: -3px; outline: 0; font: 16px/24px "Open Sans", sans-serif; color: transparent; background: linear-gradient(to right, #7d3a42 168px, #15141a 168px, #15141a 254px, #7d3a42 254px); background-clip: text; }
  .exts { display: flex; align-items: center; gap: 27px; flex: 0 0 auto; margin-left: 160px; }

  .head { flex: none; height: 81px; border-bottom: 1px solid #5e5e5e; display: flex; padding: 0 29px 0 19px; }
  .logo { margin-top: 12px; height: 50px; }
  .headmain { margin-left: 20px; }
  .titlerow { display: flex; align-items: center; height: 32px; margin: 10px 0 0 6px; }
  h1 { font-size: 22px; line-height: 32px; color: #fff; margin-left: 6px; }
  .star { margin-left: 26px; color: #bdbdbd; }
  .menus { display: flex; gap: 18px; margin-top: 6px; line-height: 26px; }
  .menus a { color: #9f9f9f; text-underline-offset: 3px; }
  .headright { margin-left: auto; display: flex; align-items: center; }
  .hbtn { gap: 11px; margin-right: 35px; color: #d5d5d5; }
  .gear { margin: 0 21px 0 -9px; color: #f0f0f0; }
  .avatar { width: 40px; height: 40px; border-radius: 50%; background: #0097a7; color: #fff; font-size: 22px; }

  .body { flex: 1; min-height: 0; display: flex; border-bottom: 1px solid #5e5e5e; }
  .side { flex: 0 0 424px; display: flex; border-right: 1px solid #5e5e5e; }
  .rail { width: 58px; display: flex; flex-direction: column; padding: 10px 8px 4px; color: #f5f5f5; }
  .rail button { height: 50px; width: 34px; border-left: 3px solid transparent; padding-right: 3px; margin-bottom: 8px; }
  .rail .vars { font: 20px/24px "Liberation Serif", serif; }
  .rail .on { color: #f27b12; border-color: #f27b12; }
  .rail .low { height: 44px; margin-bottom: 0; }
  .files { flex: 1; display: flex; flex-direction: column; padding-right: 11px; }
  .fhead { display: flex; align-items: center; gap: 7px; padding: 9px 4px 0 0; height: 52px; }
  h2 { flex: 1; font-size: 20px; line-height: 44px; padding-top: 12px; color: #e3e3e3; }
  .ftools { display: flex; gap: 27px; padding: 6px 0 0 15px; align-items: center; height: 55px; margin-right: 11px; border-bottom: 1px solid #6a6a6a; color: #f5f5f5; }
  .tree { list-style: none; padding-top: 10px; }
  .tree li { display: flex; align-items: center; height: 30px; }
  .tree button { gap: 7px; }
  .tree svg { color: #f5f5f5; }
  .tw { width: 22px; padding-left: 2px; }
  .disk { display: flex; align-items: center; gap: 10px; height: 28px; font-size: 15px; }
  .bar { border: 1px solid #bdbdbd; height: 11px; display: flex; }
  .bar i { background: #9e9e9e; }
  .disk .bar { flex: 1; }
  .disk .bar i { width: 22%; }

  .main { flex: 1; min-width: 0; display: flex; flex-direction: column; }
  .nbbar { flex: none; height: 45px; display: flex; align-items: center; border-bottom: 1px solid #5e5e5e; padding-left: 22px; }
  .add { gap: 10px; margin-right: 24px; color: #f0f0f0; }
  .res { display: flex; align-items: center; font-size: 15px; height: 30px; padding-right: 20px; border-right: 1px solid #6a6a6a; }
  .labels { display: flex; flex-direction: column; align-items: flex-end; line-height: 18px; margin-left: 4px; color: #f0f0f0; }
  .meters { display: flex; flex-direction: column; gap: 7px; margin-left: 10px; }
  .meters .bar { width: 52px; }
  .ram { width: 15%; }
  .dsk { width: 23%; }
  .caret { margin-left: 18px; }
  .editing { gap: 6px; color: #9a9a9a; height: 30px; padding: 0 21px 0 20px; border-right: 1px solid #6a6a6a; }
  .editing :global(svg) { color: #f5f5f5; }
  .fold { width: 66px; padding-right: 12px; }

  .nbwrap { flex: 1; min-height: 0; display: flex; }
  .nb { flex: 1; min-width: 0; padding-right: 6px; overflow: hidden; }
  .cell { display: flex; }
  .cell.first { margin-top: -15px; }
  .gutter { flex: 0 0 27px; display: flex; flex-direction: column; align-items: center; padding: 14px 0 0 2px; }
  .first .gutter { padding-top: 28px; }
  .gutter small { font-size: 11px; line-height: 16px; color: #5f5f5f; }
  .editor { flex: 1; min-width: 0; background: #1e1e1e; display: flex; align-items: flex-start; padding: 13px 0 13px 6px; color: #d4d4d4; font: 16px/24px "DejaVu Sans Mono", monospace; }
  .first .editor { padding-top: 0; height: 84px; }
  .prompt { width: 51px; }
  .first .prompt { padding-top: 28px; }
  .code { padding-top: 48px; }
  .first .code { padding-top: 0; }
  .line { display: flex; white-space: pre; }
  .num { color: #b5cea8; }
  .com { color: #6aa84f; }
  .kw { color: #569cd6; }

  .out { padding: 11px 0 15px 83px; display: flex; flex-direction: column; align-items: flex-start; font: 17px/22px "Liberation Sans", sans-serif; }
  .tablewrap { width: 100%; overflow: hidden; }
  table { border-collapse: collapse; }
  th, td { text-align: right; padding: 8px 9px; white-space: pre; }
  th:nth-child(even), td:nth-child(even) { padding-left: 8px; }
  thead th { font: 700 16px/22px "DejaVu Sans Mono", monospace; border-bottom: 1px solid #6a6a6a; padding-bottom: 6px; }
  tbody th { font-weight: 700; }
  tbody th, tbody td { height: 39px; padding-bottom: 7px; }
  tbody tr:nth-child(odd) { background: #444; }
  .out p { margin: 8px 0 22px 1px; }
  .magic { width: 40px; height: 40px; border-radius: 50%; background: #3b4455; }
  .hbar { display: flex; height: 21px; background: #2d2d2f; color: #7c7c7c; }
  .hbar button, .vbar button { flex: none; width: 21px; height: 21px; background: #262628; }
  .hbar i, .vbar i { background: #808080; }
  .inner { align-self: stretch; margin: 17px 0 0 -6px; }
  .inner i { flex: 841 1 0; }
  .inner span { flex: 509 1 0; }
  .outer { flex: none; }
  .outer i { flex: 1310 1 0; }
  .outer span { flex: 123 1 0; }
  .corner { width: 20px; background: #2d2d2f; }
  .vbar { flex: 0 0 20px; display: flex; flex-direction: column; background: #2d2d2f; color: #7c7c7c; }
  .vbar button { width: 20px; }
  .vbar .above { flex: 268 1 0; }
  .vbar i { flex: none; height: 21px; }
  .vbar .below { flex: 415 1 0; }

  .status { flex: none; height: 30px; display: flex; align-items: center; justify-content: center; padding-right: 75px; position: relative; }
  .status > .green { margin-right: 13px; }
  .sec { margin-right: 25px; }
  .stright { display: flex; align-items: center; gap: 17px; position: absolute; right: 8px; top: 9px; }
  .dot { width: 13px; height: 13px; border-radius: 50%; background: #00c853; }

  .taskbar { flex: none; height: 49px; background: #1b2a2e; display: flex; align-items: stretch; color: #fff; font: 17px/24px "Open Sans", sans-serif; }
  .start { width: 60px; }
  .search { flex: 0 1 430px; min-width: 0; display: flex; align-items: center; background: #323232; border: 1px solid #626262; border-bottom: 0; padding: 0 4px 0 14px; gap: 14px; }
  .search input { flex: 1; min-width: 0; border: 0; padding: 0; background: none; font: inherit; color: #e0e0e0; outline: 0; }
  .search input::placeholder { color: #e0e0e0; opacity: 1; }
  .app { width: 52px; margin-right: 10px; border-bottom: 2px solid transparent; flex: none; }
  .app.cortana { width: 60px; margin-right: 4px; }
  .app.current { width: 61px; margin: 0 0 0 -2px; padding-right: 4px; background: linear-gradient(to right, #46555a 56px, #1f2d31 56px, #1f2d31 57px, #364449 57px); border-color: #ff92d0; }
  .app.current + .app { margin-left: 5px; }
  .app.open { border-color: #ff92d0; }
  .news { gap: 11px; margin-right: 34px; }
  .tray { display: flex; align-items: center; gap: 11px; }
  .more { margin-right: 4px; }
  .lang { font-size: 15px; }
  .clock { flex-direction: column; font-size: 15px; line-height: 23px; margin-left: 15px; }
  .notif { width: 67px; padding-right: 5px; margin-right: 4px; border-right: 1px solid #8a9497; }
</style>
